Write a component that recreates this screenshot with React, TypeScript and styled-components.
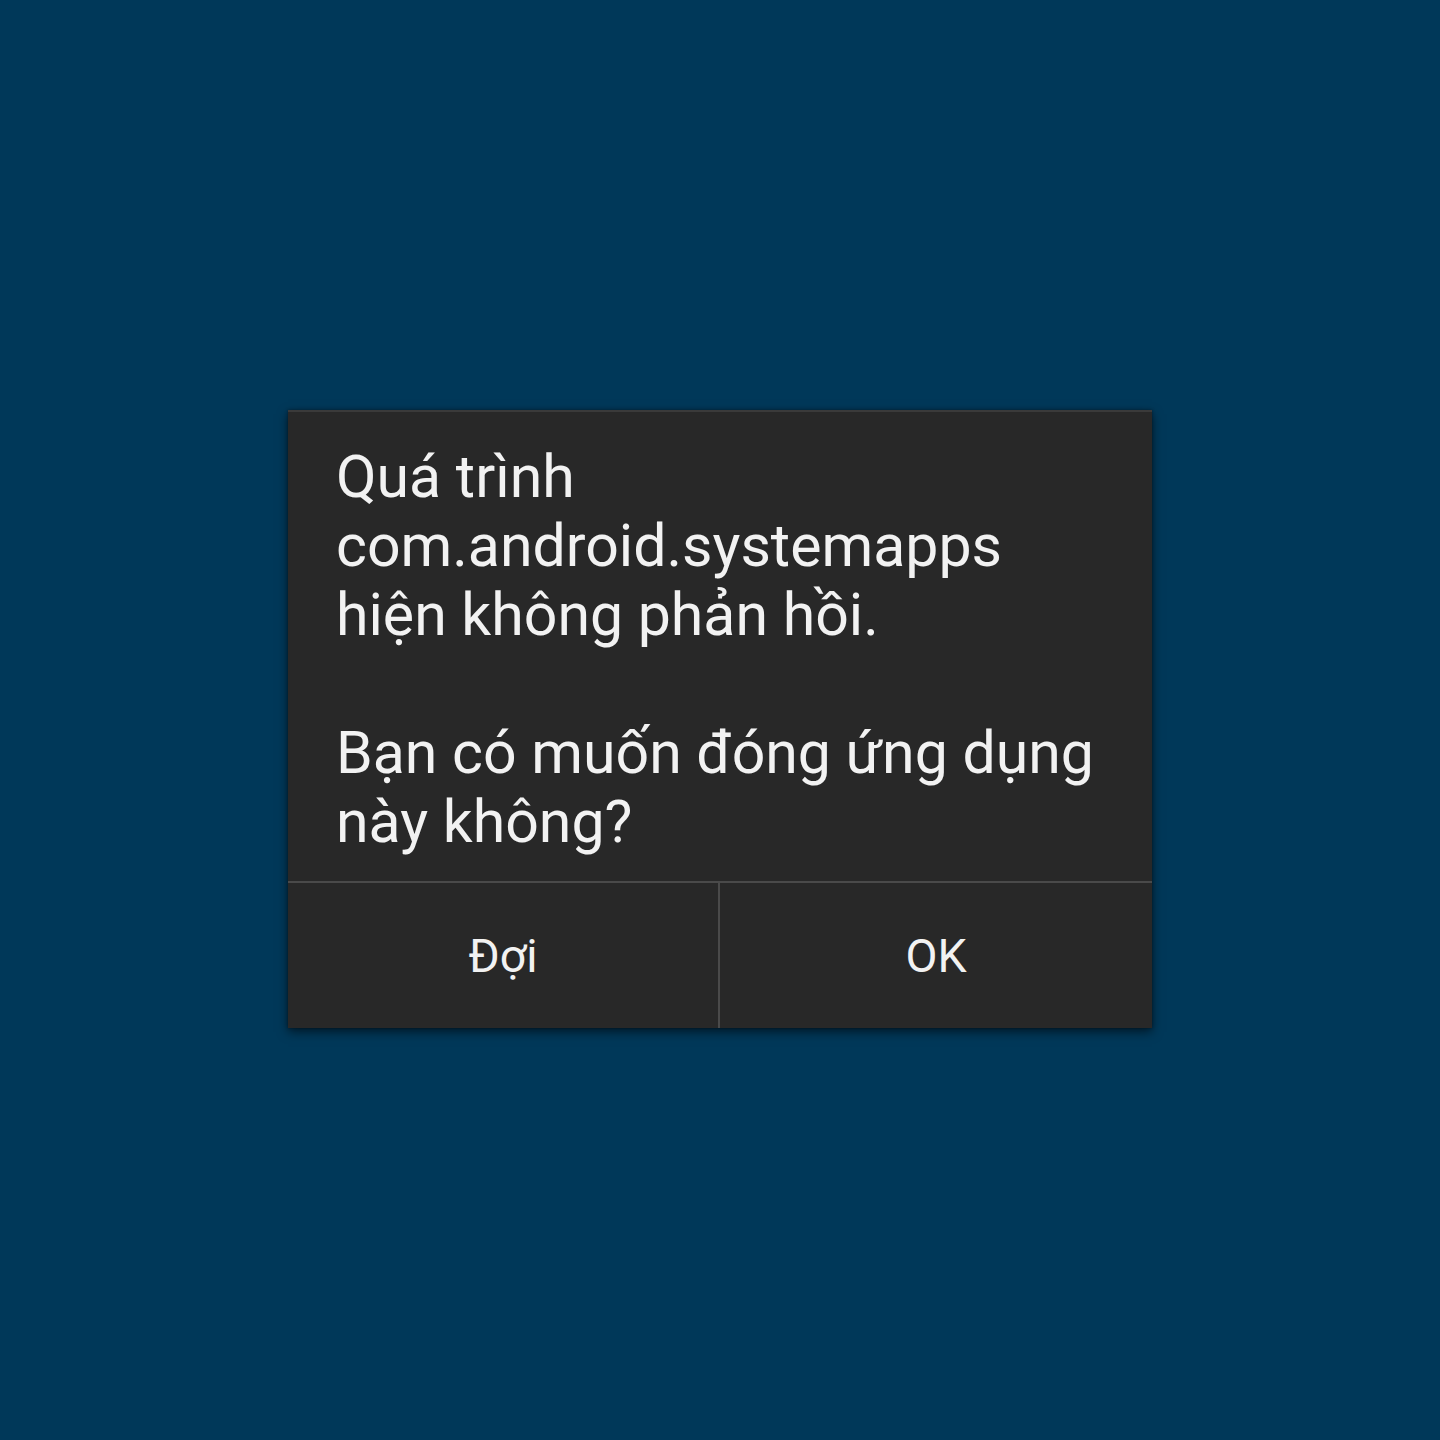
import styled, { createGlobalStyle } from "styled-components";

const GlobalStyle = createGlobalStyle`
  html, body {
    margin: 0;
    padding: 0;
    background: #003859;
  }
  body {
    font-family: Roboto, "Noto Sans", "Liberation Sans", sans-serif;
  }
`;

function App() {
  return (
    <StyledScreen>
      <GlobalStyle />
      <StyledDialog>
        <StyledMessage>
          <p>Quá trình com.android.systemapps hiện không phản hồi.</p>
          <p>Bạn có muốn đóng ứng dụng này không?</p>
        </StyledMessage>
        <StyledButtonBar>
          <StyledButton>Đợi</StyledButton>
          <StyledButton>OK</StyledButton>
        </StyledButtonBar>
      </StyledDialog>
    </StyledScreen>
  );
}

export default App;

const StyledScreen = styled.div`
  width: 1440px;
  height: 1440px;
  display: flex;
  justify-content: center;
  align-items: center;
  background: #003859;
`;
const StyledDialog = styled.div`
  width: 864px;
  margin-top: -2px;
  background: #282828;
  box-shadow: 0 4px 10px rgba(0, 0, 0, 0.55), 0 0 3px rgba(0, 0, 0, 0.4);
  border-top: 2px solid #3a3a3a;
  display: flex;
  flex-direction: column;
`;
const StyledMessage = styled.div`
  padding: 30px 44px 25px 48px;
  color: #f2f2f2;
  font-size: 59px;
  line-height: 69px;
  & > p {
    margin: 0;
  }
  & > p + p {
    margin-top: 69px;
  }
`;
const StyledButtonBar = styled.div`
  display: grid;
  grid-template-columns: 1fr 1fr;
  border-top: 2px solid #4a4a4a;
`;
const StyledButton = styled.button`
  height: 145px;
  border: none;
  background: transparent;
  color: #f2f2f2;
  font-family: Roboto, "Noto Sans", sans-serif;
  font-size: 46.5px;
  padding: 0;
  &:not(:last-child) {
    border-right: 2px solid #4a4a4a;
  }
`;
